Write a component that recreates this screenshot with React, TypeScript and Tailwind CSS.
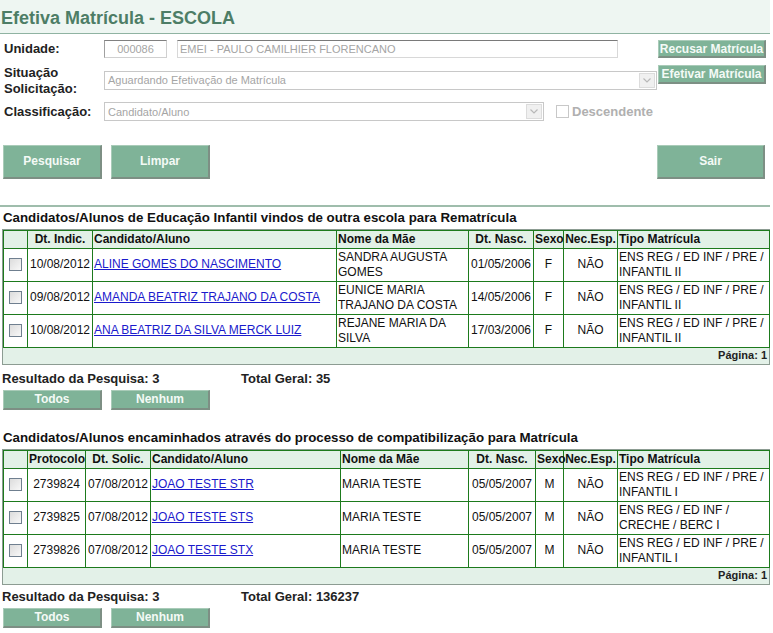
import React from "react";

const GREEN_BTN = "bg-[#7fb398] text-[#f4faf6] font-bold border-r-2 border-b-2 border-r-[#7d8f84] border-b-[#7d8f84] border-t border-l border-t-[#a9cbb8] border-l-[#a9cbb8]";

function Checkbox() {
  return (
    <div className="w-[13px] h-[13px] border border-[#6f7f8f] bg-gradient-to-br from-[#dcdcdc] to-[#f8f8f8] mx-auto" />
  );
}

function SelectBox({ w, text }: { w: number; text: string }) {
  return (
    <div
      className="h-[19px] border border-[#c8c8c8] bg-white flex items-center justify-between pl-[3px] pr-[1px]"
      style={{ width: w }}
    >
      <span className="text-[11px] text-[#a5a5a5]">{text}</span>
      <div className="w-[16px] h-[15px] bg-[#f0f0f0] border border-[#dcdcdc] flex items-center justify-center">
        <svg width="8" height="5" viewBox="0 0 8 5">
          <path d="M0.5 0.5 L4 4 L7.5 0.5" stroke="#b8b8b8" strokeWidth="1.2" fill="none" />
        </svg>
      </div>
    </div>
  );
}

type Col = { w: number; label: string; align: "left" | "center" };

function DataTable({
  cols,
  rows,
}: {
  cols: Col[];
  rows: (string | { link: string })[][];
}) {
  return (
    <div className="ml-[2px] w-[768px] border border-[#8c9c92]">
      <table className="border-collapse table-fixed w-[766px]">
        <colgroup>
          {cols.map((c, i) => (
            <col key={i} style={{ width: c.w }} />
          ))}
        </colgroup>
        <thead>
          <tr className="h-[18px] bg-[#e2f1e7]">
            {cols.map((c, i) => (
              <th
                key={i}
                className={`border border-[#1d7a1d] text-[12px] font-bold text-[#111] px-[1px] leading-[14px] whitespace-nowrap ${
                  c.align === "center" ? "text-center" : "text-left"
                }`}
              >
                {c.label}
              </th>
            ))}
          </tr>
        </thead>
        <tbody>
          {rows.map((r, ri) => (
            <tr key={ri} className="h-[33px]">
              <td className="border border-[#1d7a1d]">
                <Checkbox />
              </td>
              {r.map((cell, ci) => {
                const col = cols[ci + 1];
                return (
                  <td
                    key={ci}
                    className={`border border-[#1d7a1d] text-[12px] leading-[15px] text-[#111] px-[1px] align-middle ${
                      col.align === "center" ? "text-center" : "text-left"
                    }`}
                  >
                    {typeof cell === "string" ? (
                      cell
                    ) : (
                      <a className="text-[#1a1acc] underline">{cell.link}</a>
                    )}
                  </td>
                );
              })}
            </tr>
          ))}
        </tbody>
      </table>
      <div className="h-[16px] bg-[#e3f1e8] flex items-center justify-end pr-[2px]">
        <span className="text-[11px] font-bold text-[#222]">Página: 1</span>
      </div>
    </div>
  );
}

function ResultBlock({ total, top }: { total: string; top: string }) {
  return (
    <>
      <div className={`flex h-[16px] items-center ${top} text-[13px] font-bold text-[#222]`}>
        <span className="ml-[2px] w-[239px]">Resultado da Pesquisa: 3</span>
        <span>Total Geral: {total}</span>
      </div>
      <div className="flex gap-[9px] ml-[3px] mt-[3px]">
        <button className={`${GREEN_BTN} w-[99px] h-[20px] text-[12px] leading-none`}>Todos</button>
        <button className={`${GREEN_BTN} w-[99px] h-[20px] text-[12px] leading-none`}>Nenhum</button>
      </div>
    </>
  );
}

export default function App() {
  const cols1: Col[] = [
    { w: 24, label: "", align: "center" },
    { w: 65, label: "Dt. Indic.", align: "center" },
    { w: 244, label: "Candidato/Aluno", align: "left" },
    { w: 132, label: "Nome da Mãe", align: "left" },
    { w: 65, label: "Dt. Nasc.", align: "center" },
    { w: 30, label: "Sexo", align: "center" },
    { w: 54, label: "Nec.Esp.", align: "center" },
    { w: 152, label: "Tipo Matrícula", align: "left" },
  ];
  const cols2: Col[] = [
    { w: 24, label: "", align: "center" },
    { w: 58, label: "Protocolo", align: "center" },
    { w: 65, label: "Dt. Solic.", align: "center" },
    { w: 190, label: "Candidato/Aluno", align: "left" },
    { w: 128, label: "Nome da Mãe", align: "left" },
    { w: 67, label: "Dt. Nasc.", align: "center" },
    { w: 28, label: "Sexo", align: "center" },
    { w: 54, label: "Nec.Esp.", align: "center" },
    { w: 152, label: "Tipo Matrícula", align: "left" },
  ];
  const rows1 = [
    ["10/08/2012", { link: "ALINE GOMES DO NASCIMENTO" }, "SANDRA AUGUSTA GOMES", "01/05/2006", "F", "NÃO", "ENS REG / ED INF / PRE / INFANTIL II"],
    ["09/08/2012", { link: "AMANDA BEATRIZ TRAJANO DA COSTA" }, "EUNICE MARIA TRAJANO DA COSTA", "14/05/2006", "F", "NÃO", "ENS REG / ED INF / PRE / INFANTIL II"],
    ["10/08/2012", { link: "ANA BEATRIZ DA SILVA MERCK LUIZ" }, "REJANE MARIA DA SILVA", "17/03/2006", "F", "NÃO", "ENS REG / ED INF / PRE / INFANTIL II"],
  ];
  const rows2 = [
    ["2739824", "07/08/2012", { link: "JOAO TESTE STR" }, "MARIA TESTE", "05/05/2007", "M", "NÃO", "ENS REG / ED INF / PRE / INFANTIL I"],
    ["2739825", "07/08/2012", { link: "JOAO TESTE STS" }, "MARIA TESTE", "05/05/2007", "M", "NÃO", "ENS REG / ED INF / CRECHE / BERC I"],
    ["2739826", "07/08/2012", { link: "JOAO TESTE STX" }, "MARIA TESTE", "05/05/2007", "M", "NÃO", "ENS REG / ED INF / PRE / INFANTIL I"],
  ];

  return (
    <div className="w-[773px] h-[633px] bg-white font-['Liberation_Sans',Arial,sans-serif] text-[#222] overflow-hidden">
      {/* Header */}
      <div className="w-[770px] h-[34px] bg-[#eef6f2] border-b border-[#8fb3a2] flex items-end pb-[5px]">
        <h1 className="ml-[1px] text-[18px] leading-[20px] font-bold text-[#4d7d66]">Efetiva Matrícula - ESCOLA</h1>
      </div>

      {/* Form */}
      <div className="mt-[6px] flex items-start">
        <div className="w-[104px] pl-[4px] h-[18px] flex items-center text-[13px] font-bold">Unidade:</div>
        <div className="w-[63px] h-[18px] border border-[#d0d0d0] border-t-[#808080] border-l-[#a0a0a0] flex items-center justify-center text-[11px] text-[#a5a5a5]">000086</div>
        <div className="ml-[10px] w-[441px] h-[18px] border border-[#d8d8d8] border-t-[#7a7a7a] flex items-center pl-[2px] text-[11px] text-[#a5a5a5]">EMEI - PAULO CAMILHIER FLORENCANO</div>
        <button className={`${GREEN_BTN} ml-[40px] w-[108px] h-[18px] text-[12px] leading-none`}>Recusar Matrícula</button>
      </div>
      <div className="mt-[7px] flex items-start">
        <div className="w-[104px] pl-[4px] text-[13px] font-bold leading-[16px]">
          Situação<br />Solicitação:
        </div>
        <div className="mt-[6px]">
          <SelectBox w={553} text="Aguardando Efetivação de Matrícula" />
        </div>
        <button className={`${GREEN_BTN} ml-[1px] w-[108px] h-[19px] text-[12px] leading-none`}>Efetivar Matrícula</button>
      </div>
      <div className="mt-[5px] flex items-center">
        <div className="w-[104px] pl-[4px] text-[13px] font-bold">Classificação:</div>
        <SelectBox w={440} text="Candidato/Aluno" />
        <div className="ml-[12px] w-[13px] h-[13px] border border-[#c8c8c8] bg-white" />
        <span className="ml-[3px] text-[13px] font-bold text-[#b0b0b0]">Descendente</span>
      </div>

      {/* Action buttons */}
      <div className="mt-[23px] flex">
        <button className={`${GREEN_BTN} ml-[3px] w-[99px] h-[34px] text-[12px]`}>Pesquisar</button>
        <button className={`${GREEN_BTN} ml-[9px] w-[99px] h-[34px] text-[12px]`}>Limpar</button>
        <button className={`${GREEN_BTN} ml-[447px] w-[108px] h-[34px] text-[12px]`}>Sair</button>
      </div>

      <div className="mt-[26px] w-[770px] h-[2px] bg-[#9fbdac]" />

      {/* Section 1 */}
      <div className="ml-[3px] mt-[2px] h-[19px] flex items-center text-[13.3px] font-bold text-[#111]">
        Candidatos/Alunos de Educação Infantil vindos de outra escola para Rematrícula
      </div>
      <div className="mt-[1px]">
        <DataTable cols={cols1} rows={rows1} />
      </div>
      <ResultBlock total="35" top="mt-[6px]" />

      {/* Section 2 */}
      <div className="ml-[3px] mt-[19px] h-[19px] flex items-center text-[13.3px] font-bold text-[#111]">
        Candidatos/Alunos encaminhados através do processo de compatibilização para Matrícula
      </div>
      <div className="mt-[1px]">
        <DataTable cols={cols2} rows={rows2} />
      </div>
      <ResultBlock total="136237" top="mt-[4px]" />
    </div>
  );
}
